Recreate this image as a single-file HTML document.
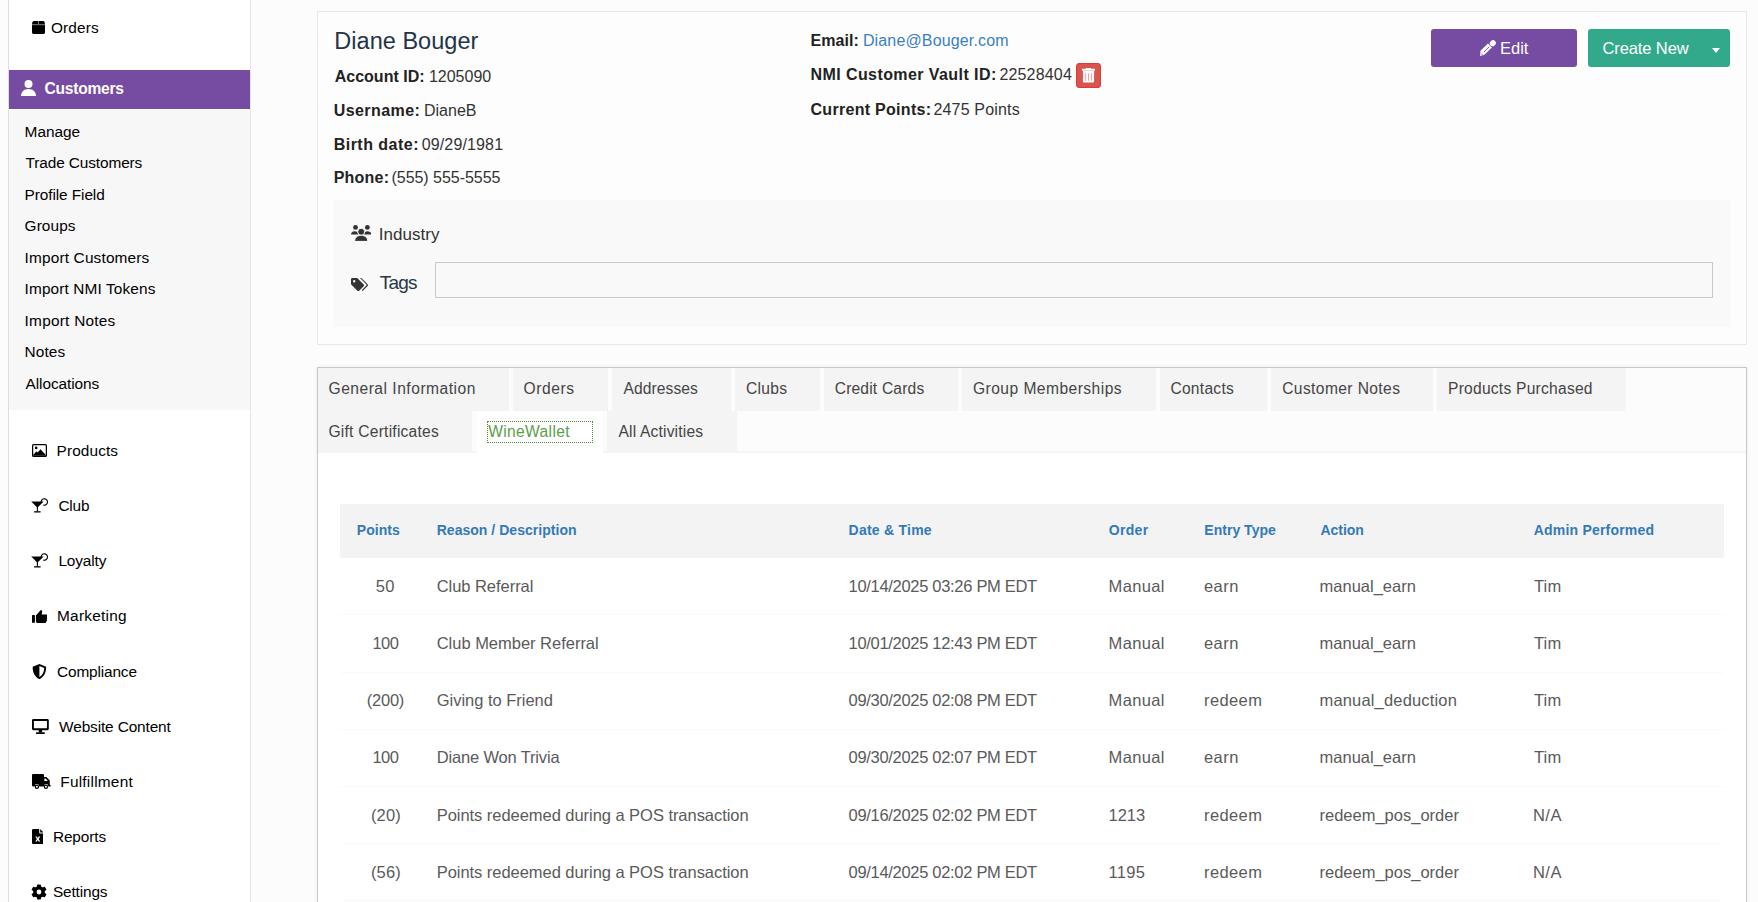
<!DOCTYPE html>
<html><head><meta charset="utf-8"><title>Customer</title>
<style>
html,body{margin:0;padding:0;width:1758px;height:902px;overflow:hidden;background:#fcfcfc}
body{position:relative;font-family:"Liberation Sans", sans-serif}
.t{position:absolute;white-space:nowrap;font-family:"Liberation Sans", sans-serif}
.r{position:absolute}
</style></head><body>
<div class="r" style="left:0px;top:0px;width:1758px;height:902px;background:#fcfcfc"></div>
<div class="r" style="left:8px;top:0px;width:243px;height:902px;background:#fff;border-left:1px solid #dedede;border-right:1px solid #e3e3e3;box-sizing:border-box"></div>
<svg class="r" style="left:32px;top:21px;width:13px;height:13px" viewBox="0 0 13 13" fill="#000"><path d="M1.8 0h9.4c.6 0 1.1.4 1.3 1L13 3.2V11.6c0 .8-.6 1.4-1.4 1.4H1.4C.6 13 0 12.4 0 11.6V3.2L.5 1C.7.4 1.2 0 1.8 0z"/><rect x="0" y="3" width="13" height="1.2" fill="#6a6a6a"/><rect x="6.3" y="0" width=".6" height="3" fill="#cfcfcf"/></svg>
<div class="t" style="left:51.00px;top:20.00px;font-size:15.4px;line-height:15.4px;color:#000;font-weight:400;letter-spacing:0.120px;">Orders</div>
<div class="r" style="left:9px;top:70px;width:241px;height:39px;background:#764ba2"></div>
<svg class="r" style="left:21px;top:80px;width:15px;height:16px" viewBox="0 0 15 16" fill="#fff"><circle cx="7.5" cy="4" r="4"/><path d="M0 16c0-4.2 3-7 7.5-7S15 11.8 15 16z"/></svg>
<div class="t" style="left:44.50px;top:81.00px;font-size:15.6px;line-height:15.6px;color:#fff;font-weight:700;letter-spacing:-0.250px;">Customers</div>
<div class="r" style="left:9px;top:110px;width:241px;height:300px;background:#f7f7f7"></div>
<div class="t" style="left:24.60px;top:124.00px;font-size:15.4px;line-height:15.4px;color:#000;font-weight:400;letter-spacing:-0.020px;">Manage</div>
<div class="t" style="left:25.60px;top:155.45px;font-size:15.4px;line-height:15.4px;color:#000;font-weight:400;letter-spacing:-0.114px;">Trade Customers</div>
<div class="t" style="left:24.60px;top:186.90px;font-size:15.4px;line-height:15.4px;color:#000;font-weight:400;letter-spacing:-0.092px;">Profile Field</div>
<div class="t" style="left:24.60px;top:218.35px;font-size:15.4px;line-height:15.4px;color:#000;font-weight:400;letter-spacing:0.080px;">Groups</div>
<div class="t" style="left:24.60px;top:249.80px;font-size:15.4px;line-height:15.4px;color:#000;font-weight:400;letter-spacing:0.160px;">Import Customers</div>
<div class="t" style="left:24.60px;top:281.25px;font-size:15.4px;line-height:15.4px;color:#000;font-weight:400;letter-spacing:0.119px;">Import NMI Tokens</div>
<div class="t" style="left:24.60px;top:312.70px;font-size:15.4px;line-height:15.4px;color:#000;font-weight:400;letter-spacing:0.236px;">Import Notes</div>
<div class="t" style="left:24.60px;top:344.15px;font-size:15.4px;line-height:15.4px;color:#000;font-weight:400;letter-spacing:0.100px;">Notes</div>
<div class="t" style="left:25.60px;top:375.60px;font-size:15.4px;line-height:15.4px;color:#000;font-weight:400;letter-spacing:-0.090px;">Allocations</div>
<div class="t" style="left:56.60px;top:443.30px;font-size:15.4px;line-height:15.4px;color:#000;font-weight:400;letter-spacing:0.100px;">Products</div>
<div class="t" style="left:58.40px;top:498.35px;font-size:15.4px;line-height:15.4px;color:#000;font-weight:400;letter-spacing:-0.167px;">Club</div>
<div class="t" style="left:58.40px;top:553.40px;font-size:15.4px;line-height:15.4px;color:#000;font-weight:400;letter-spacing:-0.133px;">Loyalty</div>
<div class="t" style="left:57.00px;top:608.45px;font-size:15.4px;line-height:15.4px;color:#000;font-weight:400;letter-spacing:0.250px;">Marketing</div>
<div class="t" style="left:57.00px;top:663.50px;font-size:15.4px;line-height:15.4px;color:#000;font-weight:400;letter-spacing:-0.144px;">Compliance</div>
<div class="t" style="left:59.10px;top:718.55px;font-size:15.4px;line-height:15.4px;color:#000;font-weight:400;letter-spacing:-0.129px;">Website Content</div>
<div class="t" style="left:60.30px;top:773.60px;font-size:15.4px;line-height:15.4px;color:#000;font-weight:400;letter-spacing:0.230px;">Fulfillment</div>
<div class="t" style="left:52.90px;top:828.65px;font-size:15.4px;line-height:15.4px;color:#000;font-weight:400;letter-spacing:-0.100px;">Reports</div>
<div class="t" style="left:52.90px;top:883.70px;font-size:15.4px;line-height:15.4px;color:#000;font-weight:400;letter-spacing:-0.143px;">Settings</div>
<svg class="r" style="left:32px;top:444px;width:15px;height:13px" viewBox="0 0 15 13" fill="#000"><path fill-rule="evenodd" d="M1.6 0h11.8A1.6 1.6 0 0 1 15 1.6v9.8a1.6 1.6 0 0 1-1.6 1.6H1.6A1.6 1.6 0 0 1 0 11.4V1.6A1.6 1.6 0 0 1 1.6 0zM1.25 1.25v10.5h12.5V1.25z"/><circle cx="4.2" cy="3.9" r="1.3"/><path d="M1.2 11.8V10.9L4.5 7.2 5.6 8.5 8.5 5.3 13.8 11V11.8z"/></svg>
<svg class="r" style="left:31px;top:498px;width:18px;height:15px" viewBox="0 0 18 15" fill="#000"><path d="M.2 3.6h12.4L6.4 9.7z"/><rect x="5.85" y="9" width="1.1" height="4.4"/><rect x="3.1" y="13.2" width="6.5" height="1.3"/><path d="M10.1 4A3.2 3.2 0 1 1 12.3 7.05" fill="none" stroke="#000" stroke-width="1.1"/></svg>
<svg class="r" style="left:31px;top:553px;width:18px;height:15px" viewBox="0 0 18 15" fill="#000"><path d="M.2 3.6h12.4L6.4 9.7z"/><rect x="5.85" y="9" width="1.1" height="4.4"/><rect x="3.1" y="13.2" width="6.5" height="1.3"/><path d="M10.1 4A3.2 3.2 0 1 1 12.3 7.05" fill="none" stroke="#000" stroke-width="1.1"/></svg>
<svg class="r" style="left:31.6px;top:610px;width:15.6px;height:13px" viewBox="0 0 16 13" fill="#000"><rect x="0" y="5" width="3" height="8" rx=".6"/><path d="M4 5.5 7.5 1.5C8 .6 8.6 0 9.3 0c.8 0 1.3.7 1.1 1.7L9.9 4.5h4.6c.8 0 1.5.7 1.5 1.5 0 .5-.3.9-.6 1.2.3.3.5.7.5 1.1 0 .6-.4 1.1-.9 1.3.2.3.3.6.3.9 0 .7-.5 1.2-1.1 1.4.1.2.1.4.1.6 0 .8-.7 1.5-1.5 1.5H7.5C5.6 14 4 12.6 4 11z"/></svg>
<svg class="r" style="left:32px;top:663.6px;width:14.8px;height:15.2px" viewBox="0 0 15 16" fill="#000"><path fill-rule="evenodd" d="M7.5 0 14.6 2.8C14.6 9.5 12 13.6 7.5 16 3 13.6.4 9.5.4 2.8zM7.5 2.2V13.7C10.7 11.7 12.4 8.8 12.6 4.2z"/></svg>
<svg class="r" style="left:32px;top:718.7px;width:16.8px;height:15px" viewBox="0 0 17 15" fill="#000"><path fill-rule="evenodd" d="M1.4 0h14.2C16.4 0 17 .6 17 1.4v8.4c0 .8-.6 1.4-1.4 1.4H1.4C.6 11.2 0 10.6 0 9.8V1.4C0 .6.6 0 1.4 0zM1.9 1.9v7.4h13.2V1.9z"/><rect x="6.8" y="11" width="3.4" height="2.4"/><rect x="4" y="13.2" width="9" height="1.8" rx=".5"/></svg>
<svg class="r" style="left:31.8px;top:774px;width:19px;height:15px" viewBox="0 0 19 15" fill="#000"><path d="M0 1.2C0 .5.5 0 1.2 0h9.6c.7 0 1.2.5 1.2 1.2V3h2.4l3.4 3.6V11h.8v1.4h-2.2a2.3 2.3 0 0 0-4.6 0H7.2a2.3 2.3 0 0 0-4.6 0H1.2C.5 12.4 0 11.9 0 11.2z"/><path d="M12.4 4.4v2.6h3.4l-2.2-2.6z" fill="#fff"/><circle cx="4.9" cy="12.7" r="1.6" stroke="#000" stroke-width="1.2" fill="#fff"/><circle cx="13.9" cy="12.7" r="1.6" stroke="#000" stroke-width="1.2" fill="#fff"/></svg>
<svg class="r" style="left:31.8px;top:829px;width:11.5px;height:15px" viewBox="0 0 11.5 15" fill="#000"><path d="M1.3 0h5.9v3.6c0 .6.5 1 1 1h3.3v9.1c0 .7-.6 1.3-1.3 1.3H1.3C.6 15 0 14.4 0 13.7V1.3C0 .6.6 0 1.3 0z"/><path d="M8.2 0l3.3 3.4H8.2z"/><path d="M3.3 7.5h1.6l.9 1.6.9-1.6h1.6L6.7 10l1.6 2.6H6.7l-.9-1.7-.9 1.7H3.3L4.9 10z" fill="#fff"/></svg>
<svg class="r" style="left:31.3px;top:883.6px;width:16px;height:16px" viewBox="-8 -8 16 16" fill="#000"><circle r="5.9"/><rect x="-1.9" y="-7.6" width="3.8" height="4" rx=".6" transform="rotate(0)"/><rect x="-1.9" y="-7.6" width="3.8" height="4" rx=".6" transform="rotate(60)"/><rect x="-1.9" y="-7.6" width="3.8" height="4" rx=".6" transform="rotate(120)"/><rect x="-1.9" y="-7.6" width="3.8" height="4" rx=".6" transform="rotate(180)"/><rect x="-1.9" y="-7.6" width="3.8" height="4" rx=".6" transform="rotate(240)"/><rect x="-1.9" y="-7.6" width="3.8" height="4" rx=".6" transform="rotate(300)"/><circle r="2.4" fill="#fff"/></svg>
<div class="r" style="left:317px;top:11px;width:1430px;height:334px;background:#fdfdfd;border:1px solid #e8e8e8;box-sizing:border-box"></div>
<div class="t" style="left:334.30px;top:30.00px;font-size:23.5px;line-height:23.5px;color:#233447;font-weight:400;letter-spacing:0.027px;">Diane Bouger</div>
<div class="t" style="left:334.70px;top:68.60px;font-size:16px;line-height:16px;color:#222;font-weight:700;letter-spacing:0.010px;">Account ID:</div>
<div class="t" style="left:428.90px;top:68.60px;font-size:16px;line-height:16px;color:#333;font-weight:400;">1205090</div>
<div class="t" style="left:333.70px;top:102.80px;font-size:16px;line-height:16px;color:#222;font-weight:700;letter-spacing:0.425px;">Username:</div>
<div class="t" style="left:423.90px;top:102.80px;font-size:16px;line-height:16px;color:#333;font-weight:400;letter-spacing:0.020px;">DianeB</div>
<div class="t" style="left:333.70px;top:136.90px;font-size:16px;line-height:16px;color:#222;font-weight:700;letter-spacing:0.480px;">Birth date:</div>
<div class="t" style="left:421.70px;top:136.90px;font-size:16px;line-height:16px;color:#333;font-weight:400;letter-spacing:0.144px;">09/29/1981</div>
<div class="t" style="left:333.70px;top:169.80px;font-size:16px;line-height:16px;color:#222;font-weight:700;letter-spacing:0.220px;">Phone:</div>
<div class="t" style="left:391.50px;top:169.80px;font-size:16px;line-height:16px;color:#333;font-weight:400;letter-spacing:-0.038px;">(555) 555-5555</div>
<div class="t" style="left:810.50px;top:32.80px;font-size:16px;line-height:16px;color:#222;font-weight:700;letter-spacing:0.080px;">Email:</div>
<div class="t" style="left:862.90px;top:32.80px;font-size:16px;line-height:16px;color:#3a7fc1;font-weight:400;letter-spacing:0.147px;">Diane@Bouger.com</div>
<div class="t" style="left:810.50px;top:67.00px;font-size:16px;line-height:16px;color:#222;font-weight:700;letter-spacing:0.419px;">NMI Customer Vault ID:</div>
<div class="t" style="left:999.40px;top:67.00px;font-size:16px;line-height:16px;color:#333;font-weight:400;letter-spacing:0.171px;">22528404</div>
<div class="t" style="left:810.50px;top:102.40px;font-size:16px;line-height:16px;color:#222;font-weight:700;letter-spacing:0.293px;">Current Points:</div>
<div class="t" style="left:933.40px;top:102.40px;font-size:16px;line-height:16px;color:#333;font-weight:400;letter-spacing:0.180px;">2475 Points</div>
<div class="r" style="left:1076px;top:63px;width:25px;height:25px;background:#d9534f;border:1px solid #d43f3a;box-sizing:border-box;border-radius:3px"></div>
<svg class="r" style="left:1082px;top:67.6px;width:13px;height:15px" viewBox="0 0 13 15" fill="#fff"><path d="M4.3 0h4.4l.5.7H13v2.1H0V.7h3.8z"/><path d="M.9 3.1h11.2v10.2c0 .8-.6 1.3-1.3 1.3H2.2c-.7 0-1.3-.5-1.3-1.3z"/><path d="M3.6 5.2v7.6M6.5 5.2v7.6M9.4 5.2v7.6" stroke="#eb9a98" stroke-width=".9"/></svg>
<div class="r" style="left:1431px;top:29px;width:146px;height:38px;background:#764ba2;border-radius:3px"></div>
<svg class="r" style="left:1479px;top:39px;width:17px;height:18px" viewBox="0 0 17 18" fill="#fff"><path d="M1 17 5.46 15.8 12.88 8.38 8.92 4.42 1.5 11.84z"/><path d="M13.6 4.4 14.02 3.98" stroke="#fff" stroke-width="5.6" stroke-linecap="round"/><path d="M4.9 13.1 10.2 7.8" stroke="#764ba2" stroke-width=".9"/><circle cx="2.9" cy="15.1" r=".7" fill="#764ba2"/></svg>
<div class="t" style="left:1500.00px;top:39.90px;font-size:16.5px;line-height:16.5px;color:#fff;font-weight:400;">Edit</div>
<div class="r" style="left:1588px;top:29px;width:142px;height:38px;background:#33a98c;border-radius:3px"></div>
<div class="t" style="left:1602.50px;top:39.80px;font-size:16.5px;line-height:16.5px;color:#fff;font-weight:400;letter-spacing:-0.111px;">Create New</div>
<svg class="r" style="left:1712px;top:47.5px;width:8px;height:5px" viewBox="0 0 8 5" fill="#fff"><path d="M0 0h8L4 5z"/></svg>
<div class="r" style="left:334px;top:200px;width:1396px;height:127px;background:#f9f9f9"></div>
<svg class="r" style="left:351px;top:225px;width:20.3px;height:16px" viewBox="0 0 20.3 16" fill="#333"><circle cx="4.5" cy="2.4" r="2.4"/><circle cx="16.4" cy="2.4" r="2.4"/><path d="M0 9.6C0 7.5 1.5 6.2 3.7 6.2S7.4 7.5 7.4 9.6z"/><path d="M12.9 9.6C12.9 7.5 14.4 6.2 16.6 6.2S20.3 7.5 20.3 9.6z"/><circle cx="10.2" cy="6.8" r="3.5" stroke="#f9f9f9" stroke-width="1"/><path d="M3.6 16.4C3.6 12.6 6.4 10.3 10.2 10.3S16.8 12.6 16.8 16.4z" stroke="#f9f9f9" stroke-width="1"/></svg>
<div class="t" style="left:378.70px;top:226.00px;font-size:17px;line-height:17px;color:#333;font-weight:400;letter-spacing:0.043px;">Industry</div>
<svg class="r" style="left:351px;top:277.5px;width:17px;height:15px" viewBox="0 0 17 15" fill="#333"><path fill-rule="evenodd" d="M0 1.3C0 .6.6 0 1.3 0h4.4c.4 0 .7.1 1 .4l6 6c.5.5.5 1.3 0 1.8l-4.5 4.5c-.5.5-1.3.5-1.8 0l-6-6C.1 6.4 0 6.1 0 5.7zM3.2 2a1.2 1.2 0 1 0 0 2.4 1.2 1.2 0 0 0 0-2.4z"/><path d="M9 0h1.3l6.3 6.3c.5.5.5 1.3 0 1.8l-5 5-.9-.9 4.7-4.7c.3-.3.3-.7 0-1z"/></svg>
<div class="t" style="left:379.70px;top:273.00px;font-size:19px;line-height:19px;color:#273646;font-weight:400;letter-spacing:-0.733px;">Tags</div>
<div class="r" style="left:435px;top:262px;width:1278px;height:36px;border:1px solid #c9c9c9;box-sizing:border-box;background:#f9f9f9"></div>
<div class="r" style="left:317px;top:367px;width:1430px;height:600px;background:#fff;border:1px solid #c8c8c8;box-sizing:border-box;box-shadow:0 0 4px rgba(0,0,0,.07)"></div>
<div class="r" style="left:318px;top:368px;width:1428px;height:85px;background:#fcfcfc;box-shadow:inset 0 -3px 3px -2px #eeeeee"></div>
<div class="r" style="left:318px;top:368px;width:191px;height:43px;background:#f4f4f4"></div>
<div class="t" style="left:328.50px;top:381.00px;font-size:15.6px;line-height:15.6px;color:#444;font-weight:400;letter-spacing:0.506px;">General Information</div>
<div class="r" style="left:513px;top:368px;width:95px;height:43px;background:#f4f4f4"></div>
<div class="t" style="left:523.60px;top:381.00px;font-size:15.6px;line-height:15.6px;color:#444;font-weight:400;letter-spacing:0.580px;">Orders</div>
<div class="r" style="left:612px;top:368px;width:119px;height:43px;background:#f4f4f4"></div>
<div class="t" style="left:623.60px;top:381.00px;font-size:15.6px;line-height:15.6px;color:#444;font-weight:400;letter-spacing:0.075px;">Addresses</div>
<div class="r" style="left:735px;top:368px;width:85px;height:43px;background:#f4f4f4"></div>
<div class="t" style="left:745.90px;top:381.00px;font-size:15.6px;line-height:15.6px;color:#444;font-weight:400;letter-spacing:0.350px;">Clubs</div>
<div class="r" style="left:824px;top:368px;width:134px;height:43px;background:#f4f4f4"></div>
<div class="t" style="left:834.70px;top:381.00px;font-size:15.6px;line-height:15.6px;color:#444;font-weight:400;letter-spacing:0.182px;">Credit Cards</div>
<div class="r" style="left:962px;top:368px;width:194px;height:43px;background:#f4f4f4"></div>
<div class="t" style="left:973.00px;top:381.00px;font-size:15.6px;line-height:15.6px;color:#444;font-weight:400;letter-spacing:0.456px;">Group Memberships</div>
<div class="r" style="left:1160px;top:368px;width:107px;height:43px;background:#f4f4f4"></div>
<div class="t" style="left:1170.40px;top:381.00px;font-size:15.6px;line-height:15.6px;color:#444;font-weight:400;letter-spacing:0.271px;">Contacts</div>
<div class="r" style="left:1271px;top:368px;width:162px;height:43px;background:#f4f4f4"></div>
<div class="t" style="left:1282.20px;top:381.00px;font-size:15.6px;line-height:15.6px;color:#444;font-weight:400;letter-spacing:0.392px;">Customer Notes</div>
<div class="r" style="left:1437px;top:368px;width:189px;height:43px;background:#f4f4f4"></div>
<div class="t" style="left:1448.00px;top:381.00px;font-size:15.6px;line-height:15.6px;color:#444;font-weight:400;letter-spacing:0.241px;">Products Purchased</div>
<div class="r" style="left:318px;top:411px;width:154px;height:42px;background:#f4f4f4"></div>
<div class="t" style="left:328.50px;top:423.70px;font-size:15.6px;line-height:15.6px;color:#444;font-weight:400;letter-spacing:0.231px;">Gift Certificates</div>
<div class="r" style="left:477px;top:411px;width:126px;height:42px;background:#fff"></div>
<div class="r" style="left:487px;top:421px;width:106px;height:22px;border:1px dotted #4a8f3a;box-sizing:border-box"></div>
<div class="t" style="left:488.20px;top:423.70px;font-size:15.6px;line-height:15.6px;color:#5c9e4c;font-weight:400;letter-spacing:0.344px;">WineWallet</div>
<div class="r" style="left:607px;top:411px;width:130px;height:42px;background:#f4f4f4"></div>
<div class="t" style="left:618.50px;top:423.70px;font-size:15.6px;line-height:15.6px;color:#444;font-weight:400;letter-spacing:0.169px;">All Activities</div>
<div class="r" style="left:340px;top:504px;width:1384px;height:54px;background:#f3f3f3"></div>
<div class="t" style="left:356.80px;top:522.90px;font-size:14px;line-height:14px;color:#337ab7;font-weight:700;letter-spacing:0.040px;">Points</div>
<div class="t" style="left:436.70px;top:522.90px;font-size:14px;line-height:14px;color:#337ab7;font-weight:700;letter-spacing:0.032px;">Reason / Description</div>
<div class="t" style="left:848.60px;top:522.90px;font-size:14px;line-height:14px;color:#337ab7;font-weight:700;letter-spacing:0.240px;">Date &amp; Time</div>
<div class="t" style="left:1108.70px;top:522.90px;font-size:14px;line-height:14px;color:#337ab7;font-weight:700;letter-spacing:0.325px;">Order</div>
<div class="t" style="left:1204.30px;top:522.90px;font-size:14px;line-height:14px;color:#337ab7;font-weight:700;letter-spacing:0.022px;">Entry Type</div>
<div class="t" style="left:1320.50px;top:522.90px;font-size:14px;line-height:14px;color:#337ab7;font-weight:700;letter-spacing:-0.040px;">Action</div>
<div class="t" style="left:1533.80px;top:522.90px;font-size:14px;line-height:14px;color:#337ab7;font-weight:700;letter-spacing:0.193px;">Admin Performed</div>
<div class="t" style="left:375.70px;top:577.70px;font-size:16.5px;line-height:16.5px;color:#5a5a5a;font-weight:400;letter-spacing:0.500px;">50</div>
<div class="t" style="left:436.70px;top:577.70px;font-size:16.5px;line-height:16.5px;color:#5a5a5a;font-weight:400;letter-spacing:-0.042px;">Club Referral</div>
<div class="t" style="left:848.60px;top:577.70px;font-size:16.5px;line-height:16.5px;color:#5a5a5a;font-weight:400;letter-spacing:-0.309px;">10/14/2025 03:26 PM EDT</div>
<div class="t" style="left:1108.60px;top:577.70px;font-size:16.5px;line-height:16.5px;color:#5a5a5a;font-weight:400;letter-spacing:0.340px;">Manual</div>
<div class="t" style="left:1204.00px;top:577.70px;font-size:16.5px;line-height:16.5px;color:#5a5a5a;font-weight:400;letter-spacing:0.433px;">earn</div>
<div class="t" style="left:1319.50px;top:577.70px;font-size:16.5px;line-height:16.5px;color:#5a5a5a;font-weight:400;letter-spacing:0.010px;">manual_earn</div>
<div class="t" style="left:1534.00px;top:577.70px;font-size:16.5px;line-height:16.5px;color:#5a5a5a;font-weight:400;letter-spacing:0.150px;">Tim</div>
<div class="r" style="left:340px;top:614px;width:1384px;height:1px;background:#fafafa"></div>
<div class="t" style="left:372.40px;top:634.90px;font-size:16.5px;line-height:16.5px;color:#5a5a5a;font-weight:400;letter-spacing:-0.500px;">100</div>
<div class="t" style="left:436.70px;top:634.90px;font-size:16.5px;line-height:16.5px;color:#5a5a5a;font-weight:400;letter-spacing:-0.016px;">Club Member Referral</div>
<div class="t" style="left:848.60px;top:634.90px;font-size:16.5px;line-height:16.5px;color:#5a5a5a;font-weight:400;letter-spacing:-0.309px;">10/01/2025 12:43 PM EDT</div>
<div class="t" style="left:1108.60px;top:634.90px;font-size:16.5px;line-height:16.5px;color:#5a5a5a;font-weight:400;letter-spacing:0.340px;">Manual</div>
<div class="t" style="left:1204.00px;top:634.90px;font-size:16.5px;line-height:16.5px;color:#5a5a5a;font-weight:400;letter-spacing:0.433px;">earn</div>
<div class="t" style="left:1319.50px;top:634.90px;font-size:16.5px;line-height:16.5px;color:#5a5a5a;font-weight:400;letter-spacing:0.010px;">manual_earn</div>
<div class="t" style="left:1534.00px;top:634.90px;font-size:16.5px;line-height:16.5px;color:#5a5a5a;font-weight:400;letter-spacing:0.150px;">Tim</div>
<div class="r" style="left:340px;top:672px;width:1384px;height:1px;background:#fafafa"></div>
<div class="t" style="left:366.80px;top:692.10px;font-size:16.5px;line-height:16.5px;color:#5a5a5a;font-weight:400;letter-spacing:-0.250px;">(200)</div>
<div class="t" style="left:436.70px;top:692.10px;font-size:16.5px;line-height:16.5px;color:#5a5a5a;font-weight:400;letter-spacing:-0.013px;">Giving to Friend</div>
<div class="t" style="left:848.60px;top:692.10px;font-size:16.5px;line-height:16.5px;color:#5a5a5a;font-weight:400;letter-spacing:-0.309px;">09/30/2025 02:08 PM EDT</div>
<div class="t" style="left:1108.60px;top:692.10px;font-size:16.5px;line-height:16.5px;color:#5a5a5a;font-weight:400;letter-spacing:0.340px;">Manual</div>
<div class="t" style="left:1204.00px;top:692.10px;font-size:16.5px;line-height:16.5px;color:#5a5a5a;font-weight:400;letter-spacing:0.400px;">redeem</div>
<div class="t" style="left:1319.50px;top:692.10px;font-size:16.5px;line-height:16.5px;color:#5a5a5a;font-weight:400;letter-spacing:0.167px;">manual_deduction</div>
<div class="t" style="left:1534.00px;top:692.10px;font-size:16.5px;line-height:16.5px;color:#5a5a5a;font-weight:400;letter-spacing:0.150px;">Tim</div>
<div class="r" style="left:340px;top:729px;width:1384px;height:1px;background:#fafafa"></div>
<div class="t" style="left:372.40px;top:749.30px;font-size:16.5px;line-height:16.5px;color:#5a5a5a;font-weight:400;letter-spacing:-0.500px;">100</div>
<div class="t" style="left:436.70px;top:749.30px;font-size:16.5px;line-height:16.5px;color:#5a5a5a;font-weight:400;letter-spacing:-0.160px;">Diane Won Trivia</div>
<div class="t" style="left:848.60px;top:749.30px;font-size:16.5px;line-height:16.5px;color:#5a5a5a;font-weight:400;letter-spacing:-0.309px;">09/30/2025 02:07 PM EDT</div>
<div class="t" style="left:1108.60px;top:749.30px;font-size:16.5px;line-height:16.5px;color:#5a5a5a;font-weight:400;letter-spacing:0.340px;">Manual</div>
<div class="t" style="left:1204.00px;top:749.30px;font-size:16.5px;line-height:16.5px;color:#5a5a5a;font-weight:400;letter-spacing:0.433px;">earn</div>
<div class="t" style="left:1319.50px;top:749.30px;font-size:16.5px;line-height:16.5px;color:#5a5a5a;font-weight:400;letter-spacing:0.010px;">manual_earn</div>
<div class="t" style="left:1534.00px;top:749.30px;font-size:16.5px;line-height:16.5px;color:#5a5a5a;font-weight:400;letter-spacing:0.150px;">Tim</div>
<div class="r" style="left:340px;top:786px;width:1384px;height:1px;background:#fafafa"></div>
<div class="t" style="left:370.90px;top:806.50px;font-size:16.5px;line-height:16.5px;color:#5a5a5a;font-weight:400;letter-spacing:0.167px;">(20)</div>
<div class="t" style="left:436.70px;top:806.50px;font-size:16.5px;line-height:16.5px;color:#5a5a5a;font-weight:400;letter-spacing:-0.044px;">Points redeemed during a POS transaction</div>
<div class="t" style="left:848.60px;top:806.50px;font-size:16.5px;line-height:16.5px;color:#5a5a5a;font-weight:400;letter-spacing:-0.309px;">09/16/2025 02:02 PM EDT</div>
<div class="t" style="left:1108.60px;top:806.50px;font-size:16.5px;line-height:16.5px;color:#5a5a5a;font-weight:400;letter-spacing:-0.067px;">1213</div>
<div class="t" style="left:1204.00px;top:806.50px;font-size:16.5px;line-height:16.5px;color:#5a5a5a;font-weight:400;letter-spacing:0.400px;">redeem</div>
<div class="t" style="left:1319.50px;top:806.50px;font-size:16.5px;line-height:16.5px;color:#5a5a5a;font-weight:400;">redeem_pos_order</div>
<div class="t" style="left:1533.00px;top:806.50px;font-size:16.5px;line-height:16.5px;color:#5a5a5a;font-weight:400;letter-spacing:0.450px;">N/A</div>
<div class="r" style="left:340px;top:843px;width:1384px;height:1px;background:#fafafa"></div>
<div class="t" style="left:370.90px;top:863.70px;font-size:16.5px;line-height:16.5px;color:#5a5a5a;font-weight:400;letter-spacing:0.167px;">(56)</div>
<div class="t" style="left:436.70px;top:863.70px;font-size:16.5px;line-height:16.5px;color:#5a5a5a;font-weight:400;letter-spacing:-0.044px;">Points redeemed during a POS transaction</div>
<div class="t" style="left:848.60px;top:863.70px;font-size:16.5px;line-height:16.5px;color:#5a5a5a;font-weight:400;letter-spacing:-0.309px;">09/14/2025 02:02 PM EDT</div>
<div class="t" style="left:1108.60px;top:863.70px;font-size:16.5px;line-height:16.5px;color:#5a5a5a;font-weight:400;letter-spacing:0.267px;">1195</div>
<div class="t" style="left:1204.00px;top:863.70px;font-size:16.5px;line-height:16.5px;color:#5a5a5a;font-weight:400;letter-spacing:0.400px;">redeem</div>
<div class="t" style="left:1319.50px;top:863.70px;font-size:16.5px;line-height:16.5px;color:#5a5a5a;font-weight:400;">redeem_pos_order</div>
<div class="t" style="left:1533.00px;top:863.70px;font-size:16.5px;line-height:16.5px;color:#5a5a5a;font-weight:400;letter-spacing:0.450px;">N/A</div>
<div class="r" style="left:340px;top:900px;width:1384px;height:1px;background:#fafafa"></div>
</body></html>
